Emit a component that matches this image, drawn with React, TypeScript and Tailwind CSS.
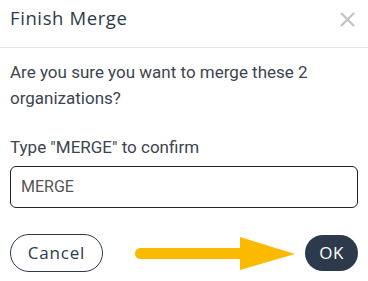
const slate = "text-[#2d3a4b]"

function CloseIcon() {
  return (
    <svg width="17" height="17" viewBox="0 0 17 17" className="text-[#c4c4c4]">
      <path d="M2 2 L15 15 M15 2 L2 15" stroke="currentColor" strokeWidth="2.4" />
    </svg>
  )
}

function Arrow() {
  return (
    <svg width="161" height="36" viewBox="0 0 161 36" className="ml-[32px] shrink-0">
      <line x1="5.5" y1="18.5" x2="110" y2="18.5" stroke="#fbb900" strokeWidth="11" strokeLinecap="round" />
      <polygon points="105,2 160,19 105,35" fill="#fbb900" />
    </svg>
  )
}

export default function App() {
  return (
    <div className="w-[368px] h-[281px] bg-white overflow-hidden">
      {/* Header */}
      <div className="h-[48px] border-b border-[#e6e6e6] flex items-start justify-between pl-[10px] pr-[12px]">
        <h2 className={`mt-[5px] text-[18.5px] leading-[26px] ${slate} font-['Open_Sans',sans-serif] tracking-[0.6px]`}>
          Finish Merge
        </h2>
        <div className="mt-[11px]">
          <CloseIcon />
        </div>
      </div>

      {/* Body */}
      <div className="px-[10px] font-['Roboto',sans-serif] text-[#3d4451]">
        <p className="mt-[11px] text-[17px] leading-[26px]">
          Are you sure you want to merge these 2 organizations?
        </p>
        <p className="mt-[24px] text-[17px] leading-[24px]">Type "MERGE" to confirm</p>
        <div className="mt-[7px] h-[42px] border border-[#222] rounded-[6px] flex items-center px-[10px]">
          <span className="text-[16px] text-[#555]">MERGE</span>
        </div>

        {/* Actions */}
        <div className="mt-[26px] flex items-center">
          <button className={`w-[93px] h-[38px] rounded-full border border-[#2d3a4b] ${slate} text-[17px] tracking-[0.8px] font-['Open_Sans',sans-serif]`}>
            Cancel
          </button>
          <Arrow />
          <button className="ml-auto w-[53px] h-[36px] rounded-full bg-[#2d3a4b] text-white text-[17px] tracking-[0.5px] font-['Open_Sans',sans-serif]">
            OK
          </button>
        </div>
      </div>
    </div>
  )
}
